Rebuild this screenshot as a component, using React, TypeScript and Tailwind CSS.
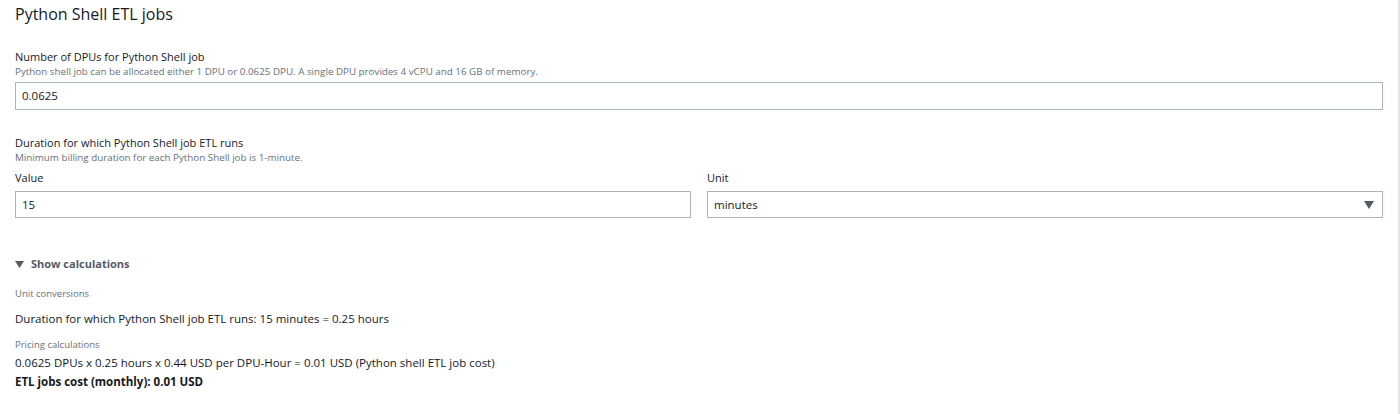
import React from 'react';

const font = { fontFamily: '"Open Sans", "Liberation Sans", sans-serif' };

export default function App() {
  return (
    <div className="flex h-[414px] w-full bg-white text-[#16191f]" style={font}>
      <div className="flex-1 flex flex-col pl-[15px] pr-[15px] border-r-2 border-[#e3e6e6]">
        <h2 className="text-[16px] leading-[22px] mt-[3px]">Python Shell ETL jobs</h2>

        <div className="mt-[24px] flex flex-col">
          <label className="text-[11px] leading-[16px]">Number of DPUs for Python Shell job</label>
          <span className="text-[9.8px] leading-[14px] text-[#687078]">Python shell job can be allocated either 1 DPU or 0.0625 DPU. A single DPU provides 4 vCPU and 16 GB of memory.</span>
          <div className="mt-[3px] h-[28px] border border-[#aab7b8] flex items-center px-[6px] text-[11.5px]">0.0625</div>
        </div>

        <div className="mt-[25px] flex flex-col">
          <label className="text-[11px] leading-[16px]">Duration for which Python Shell job ETL runs</label>
          <span className="text-[9.8px] leading-[14px] text-[#687078]">Minimum billing duration for each Python Shell job is 1-minute.</span>
          <div className="mt-[5px] flex gap-4">
            <div className="flex-1 flex flex-col">
              <span className="text-[11px] leading-[16px]">Value</span>
              <div className="mt-[5px] h-[27px] border border-[#aab7b8] flex items-center px-[6px] text-[11.5px]">15</div>
            </div>
            <div className="flex-1 flex flex-col">
              <span className="text-[11px] leading-[16px]">Unit</span>
              <div className="mt-[5px] h-[27px] border border-[#aab7b8] flex items-center justify-between pl-[6px] pr-[8px] text-[11.5px]">
                <span>minutes</span>
                <svg width="10" height="8" viewBox="0 0 10 8"><path d="M0 0h10L5 8z" fill="#545b64" /></svg>
              </div>
            </div>
          </div>
        </div>

        <div className="mt-[37px] flex items-center gap-[7px] text-[#545b64] font-bold text-[11px] leading-[18px]">
          <svg width="9" height="7" viewBox="0 0 9 7"><path d="M0 0h9L4.5 7z" fill="#545b64" /></svg>
          <span>Show calculations</span>
        </div>

        <span className="mt-[14px] text-[9.5px] leading-[14px] text-[#687078]">Unit conversions</span>
        <span className="mt-[9px] text-[11.5px] leading-[18px]">Duration for which Python Shell job ETL runs: 15 minutes = 0.25 hours</span>
        <span className="mt-[10px] text-[9.5px] leading-[14px] text-[#687078]">Pricing calculations</span>
        <span className="mt-[2px] text-[11.5px] leading-[18px]">0.0625 DPUs x 0.25 hours x 0.44 USD per DPU-Hour = 0.01 USD (Python shell ETL job cost)</span>
        <span className="mt-[1px] text-[11.5px] leading-[18px] font-bold">ETL jobs cost (monthly): 0.01 USD</span>
      </div>
    </div>
  );
}
